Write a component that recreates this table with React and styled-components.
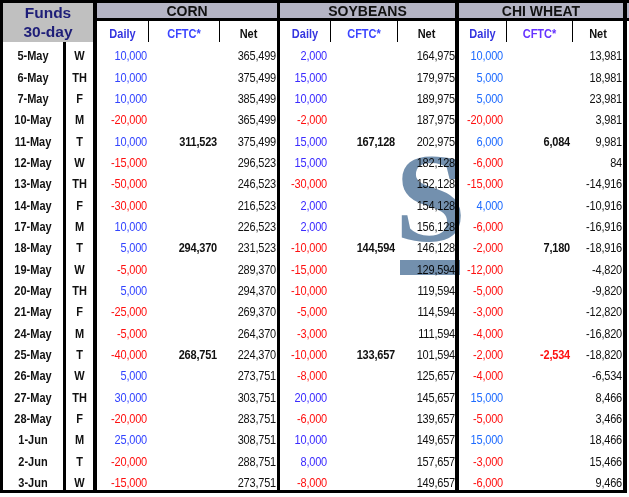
import React from 'react';
import styled, { createGlobalStyle } from 'styled-components';

const ROW_HEIGHT = 448 / 21;
const RED = '#ff1010';

const GlobalStyle = createGlobalStyle`
  body {
    margin: 0;
    background: #fff;
    font-family: 'Liberation Sans', Arial, sans-serif;
  }
`;

const Page = styled.div`
  position: relative;
  width: 629px;
  height: 497px;
  overflow: hidden;
`;

const Sheet = styled.div`
  display: flex;
  width: 629px;
  height: 493px;
  box-sizing: border-box;
  border-top: 3px solid #000;
  border-left: 3px solid #000;
`;

const Block = styled.div`
  display: flex;
  flex-direction: column;
  flex: none;
  width: ${(p) => p.$width}px;
  border-right: ${(p) => p.$edge || 0}px solid #000;
  border-bottom: ${(p) => (p.$open ? 0 : 3)}px solid #000;
`;

const FundsTitle = styled.div`
  height: 39px;
  background: #c0c0c0;
  display: flex;
  flex-direction: column;
  align-items: center;
  justify-content: center;
  padding-bottom: 1px;
  box-sizing: border-box;
  font-size: 15.5px;
  font-weight: bold;
  line-height: 19.5px;
  color: #1e1e78;
`;

const Title = styled.div`
  height: 15px;
  flex: none;
  background: #b4b4c4;
  border-bottom: 3px solid #000;
  display: flex;
  align-items: flex-end;
  justify-content: center;
  font-size: 14px;
  font-weight: bold;
  line-height: 14px;
  color: #111;
  white-space: nowrap;
  overflow: hidden;
`;

const Grid = styled.div`
  display: grid;
  grid-template-columns: ${(p) => p.$cols};
  column-gap: 1px;
`;

const SubHeader = styled(Grid)`
  height: 21px;
  background: #000;
`;

// reference text is a little taller than it is wide
const Text = styled.span`
  display: inline-block;
  transform: scaleY(1.12);
  transform-origin: 50% 70%;
`;

const SubCell = styled.div`
  background: #fff;
  display: flex;
  align-items: flex-end;
  justify-content: center;
  padding-bottom: 1px;
  font-size: 11px;
  font-weight: bold;
  line-height: 13px;
  color: ${(p) => p.$color};
`;

const DataRow = styled(Grid)`
  height: ${ROW_HEIGHT}px;
`;

const Value = styled.div`
  display: flex;
  align-items: flex-end;
  justify-content: flex-end;
  padding-right: ${(p) => p.$pad}px;
  overflow: hidden;
  white-space: nowrap;
  font-size: 11px;
  line-height: 13px;
  letter-spacing: -0.2px;
  font-weight: ${(p) => (p.$bold ? 'bold' : 'normal')};
  color: ${(p) => p.$color};
`;

const DateRow = styled.div`
  display: grid;
  grid-template-columns: 63px 27px;
  height: ${ROW_HEIGHT}px;
`;

const DateCell = styled.div`
  display: flex;
  align-items: flex-end;
  justify-content: center;
  box-sizing: border-box;
  border-right: ${(p) => (p.$divider ? 3 : 0)}px solid #000;
  font-size: 11px;
  font-weight: bold;
  line-height: 13px;
  color: #111;
`;

const Sliver = styled.div`
  height: 15px;
  background: #b4b4c4;
  border-bottom: 3px solid #000;
`;

const WatermarkS = styled.div`
  position: absolute;
  left: 395px;
  top: 134px;
  font-family: 'Liberation Serif', 'Times New Roman', serif;
  font-size: 128px;
  font-weight: bold;
  line-height: 1;
  color: #7390ae;
  mix-blend-mode: multiply;
  pointer-events: none;
`;

const WatermarkBar = styled.div`
  position: absolute;
  left: 400px;
  top: 260px;
  width: 60px;
  height: 15px;
  background: #7390ae;
  mix-blend-mode: multiply;
  pointer-events: none;
`;

const rows = [
  ['5-May', 'W', ['10,000', '', '365,499'], ['2,000', '', '164,975'], ['10,000', '', '13,981']],
  ['6-May', 'TH', ['10,000', '', '375,499'], ['15,000', '', '179,975'], ['5,000', '', '18,981']],
  ['7-May', 'F', ['10,000', '', '385,499'], ['10,000', '', '189,975'], ['5,000', '', '23,981']],
  ['10-May', 'M', ['-20,000', '', '365,499'], ['-2,000', '', '187,975'], ['-20,000', '', '3,981']],
  ['11-May', 'T', ['10,000', '311,523', '375,499'], ['15,000', '167,128', '202,975'], ['6,000', '6,084', '9,981']],
  ['12-May', 'W', ['-15,000', '', '296,523'], ['15,000', '', '182,128'], ['-6,000', '', '84']],
  ['13-May', 'TH', ['-50,000', '', '246,523'], ['-30,000', '', '152,128'], ['-15,000', '', '-14,916']],
  ['14-May', 'F', ['-30,000', '', '216,523'], ['2,000', '', '154,128'], ['4,000', '', '-10,916']],
  ['17-May', 'M', ['10,000', '', '226,523'], ['2,000', '', '156,128'], ['-6,000', '', '-16,916']],
  ['18-May', 'T', ['5,000', '294,370', '231,523'], ['-10,000', '144,594', '146,128'], ['-2,000', '7,180', '-18,916']],
  ['19-May', 'W', ['-5,000', '', '289,370'], ['-15,000', '', '129,594'], ['-12,000', '', '-4,820']],
  ['20-May', 'TH', ['5,000', '', '294,370'], ['-10,000', '', '119,594'], ['-5,000', '', '-9,820']],
  ['21-May', 'F', ['-25,000', '', '269,370'], ['-5,000', '', '114,594'], ['-3,000', '', '-12,820']],
  ['24-May', 'M', ['-5,000', '', '264,370'], ['-3,000', '', '111,594'], ['-4,000', '', '-16,820']],
  ['25-May', 'T', ['-40,000', '268,751', '224,370'], ['-10,000', '133,657', '101,594'], ['-2,000', '-2,534', '-18,820']],
  ['26-May', 'W', ['5,000', '', '273,751'], ['-8,000', '', '125,657'], ['-4,000', '', '-6,534']],
  ['27-May', 'TH', ['30,000', '', '303,751'], ['20,000', '', '145,657'], ['15,000', '', '8,466']],
  ['28-May', 'F', ['-20,000', '', '283,751'], ['-6,000', '', '139,657'], ['-5,000', '', '3,466']],
  ['1-Jun', 'M', ['25,000', '', '308,751'], ['10,000', '', '149,657'], ['15,000', '', '18,466']],
  ['2-Jun', 'T', ['-20,000', '', '288,751'], ['8,000', '', '157,657'], ['-3,000', '', '15,466']],
  ['3-Jun', 'W', ['-15,000', '', '273,751'], ['-8,000', '', '149,657'], ['-6,000', '', '9,466']],
];

const commodities = [
  {
    name: 'CORN', width: 180, edge: 3, cols: '51px 70px 57px', pads: [1, 2, 1],
    blue: '#3344ff', heads: ['#3434e0', '#3a44ff', '#111'],
  },
  {
    name: 'SOYBEANS', width: 175, edge: 4, cols: '50px 66px 57px', pads: [3, 2, 0],
    blue: '#3b2bff', heads: ['#3434e0', '#3a44ff', '#111'],
  },
  {
    name: 'CHI WHEAT', width: 164, edge: 4, cols: '47px 65px 50px', pads: [3, 2, 1],
    blue: '#1e6bff', heads: ['#3434e0', '#6633ff', '#111'],
  },
];

const valueColor = (value, col, blue) => {
  const negative = value.startsWith('-');
  if (col === 0) return negative ? RED : blue;
  if (col === 1) return negative ? RED : '#111';
  return '#111';
};

const Commodity = ({ spec, index }) => (
  <Block $width={spec.width} $edge={spec.edge}>
    <Title>{spec.name}</Title>
    <SubHeader $cols={spec.cols}>
      {['Daily', 'CFTC*', 'Net'].map((label, i) => (
        <SubCell key={label} $color={spec.heads[i]}><Text>{label}</Text></SubCell>
      ))}
    </SubHeader>
    {rows.map((row) => (
      <DataRow key={row[0]} $cols={spec.cols}>
        {row[index + 2].map((value, col) => (
          <Value
            key={col}
            $pad={spec.pads[col]}
            $bold={col === 1}
            $color={valueColor(value, col, spec.blue)}
          >
            <Text>{value}</Text>
          </Value>
        ))}
      </DataRow>
    ))}
  </Block>
);

const App = () => (
  <Page>
    <GlobalStyle />
    <Sheet>
      <Block $width={90} $edge={4}>
        <FundsTitle>
          <span>Funds</span>
          <span>30-day</span>
        </FundsTitle>
        {rows.map((row) => (
          <DateRow key={row[0]}>
            <DateCell $divider><Text>{row[0]}</Text></DateCell>
            <DateCell><Text>{row[1]}</Text></DateCell>
          </DateRow>
        ))}
      </Block>
      {commodities.map((spec, i) => (
        <Commodity key={spec.name} spec={spec} index={i} />
      ))}
      <Block $width={2} $open>
        <Sliver />
      </Block>
    </Sheet>
    <WatermarkS>S</WatermarkS>
    <WatermarkBar />
  </Page>
);

export default App;
